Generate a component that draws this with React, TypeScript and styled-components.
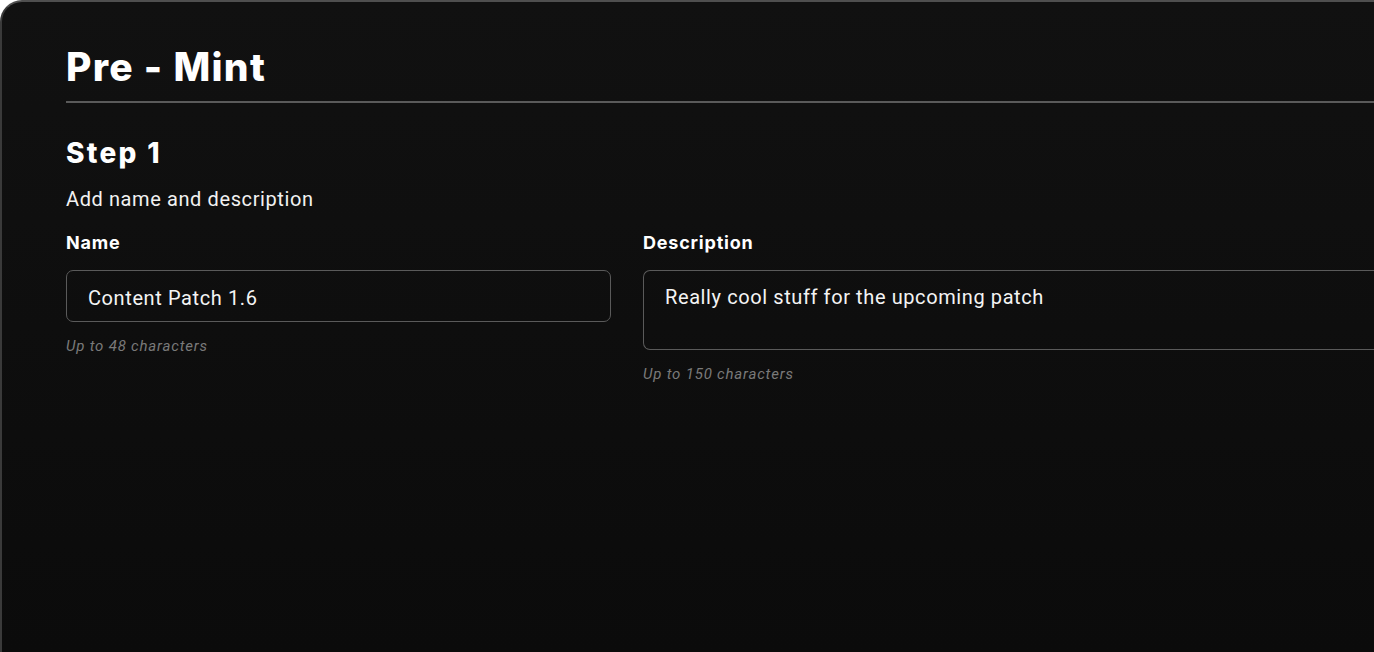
import React from "react";
import styled, { createGlobalStyle } from "styled-components";

const GlobalStyle = createGlobalStyle`
  html, body {
    margin: 0;
    padding: 0;
    background: #ffffff;
    overflow: hidden;
  }
  * {
    box-sizing: border-box;
  }
`;

// the panel runs off the right and bottom of the shot, so only top/left edges show
const Card = styled.div`
  width: 100vw;
  height: 100vh;
  background: linear-gradient(to bottom, #111111, #0b0b0b);
  border-top: 2px solid #4f4f4f;
  border-left: 2px solid #3a3a3a;
  border-top-left-radius: 22px;
  padding: 40px 0 0 64px;
  color: #ffffff;
  font-family: Roboto, "Liberation Sans", sans-serif;
`;

const Title = styled.h1`
  margin: 0;
  font-family: Inter, "Liberation Sans", sans-serif;
  font-size: 39px;
  font-weight: 800;
  line-height: 50px;
  letter-spacing: 1.3px;
`;

const Divider = styled.hr`
  margin: 9px 0 0;
  border: none;
  height: 2px;
  background: #5a5a5a;
`;

const StepTitle = styled.h2`
  margin: 32px 0 0;
  font-family: Inter, "Liberation Sans", sans-serif;
  font-size: 28px;
  font-weight: 800;
  line-height: 36px;
  letter-spacing: 2.3px;
`;

const Subtitle = styled.p`
  margin: 16px 0 0;
  font-size: 20px;
  line-height: 24px;
  letter-spacing: 0.6px;
  color: #f2f2f2;
`;

const Fields = styled.div`
  display: grid;
  grid-template-columns: 545px 1fr;
  column-gap: 32px;
  margin-top: 21px;
`;

const Field = styled.div`
  display: flex;
  flex-direction: column;
`;

const Label = styled.label`
  font-family: Inter, "Liberation Sans", sans-serif;
  font-size: 18px;
  font-weight: 700;
  line-height: 22px;
  letter-spacing: 0.8px;
  margin-bottom: 16px;
`;

const Box = styled.div<{ $tall?: boolean }>`
  height: ${(p) => (p.$tall ? "80px" : "52px")};
  border: 1px solid #5a5a5a;
  border-radius: 7px;
  padding: ${(p) => (p.$tall ? "14px 21px 0" : "3px 21px 0")};
  display: flex;
  align-items: ${(p) => (p.$tall ? "flex-start" : "center")};
  font-size: 20px;
  line-height: 24px;
  letter-spacing: 0.6px;
  color: #f4f4f4;

  ${(p) =>
    p.$tall &&
    `
    border-right: none;
    border-top-right-radius: 0;
    border-bottom-right-radius: 0;
  `}
`;

const Hint = styled.span`
  margin-top: 15px;
  font-size: 15px;
  font-style: italic;
  color: #7a7a7a;
  line-height: 18px;
  letter-spacing: 0.8px;
`;

export default function App() {
  return (
    <>
      <GlobalStyle />
      <Card>
        <Title>Pre - Mint</Title>
        <Divider />
        <StepTitle>Step 1</StepTitle>
        <Subtitle>Add name and description</Subtitle>
        <Fields>
          <Field>
            <Label>Name</Label>
            <Box>Content Patch 1.6</Box>
            <Hint>Up to 48 characters</Hint>
          </Field>
          <Field>
            <Label>Description</Label>
            <Box $tall>Really cool stuff for the upcoming patch</Box>
            <Hint>Up to 150 characters</Hint>
          </Field>
        </Fields>
      </Card>
    </>
  );
}
